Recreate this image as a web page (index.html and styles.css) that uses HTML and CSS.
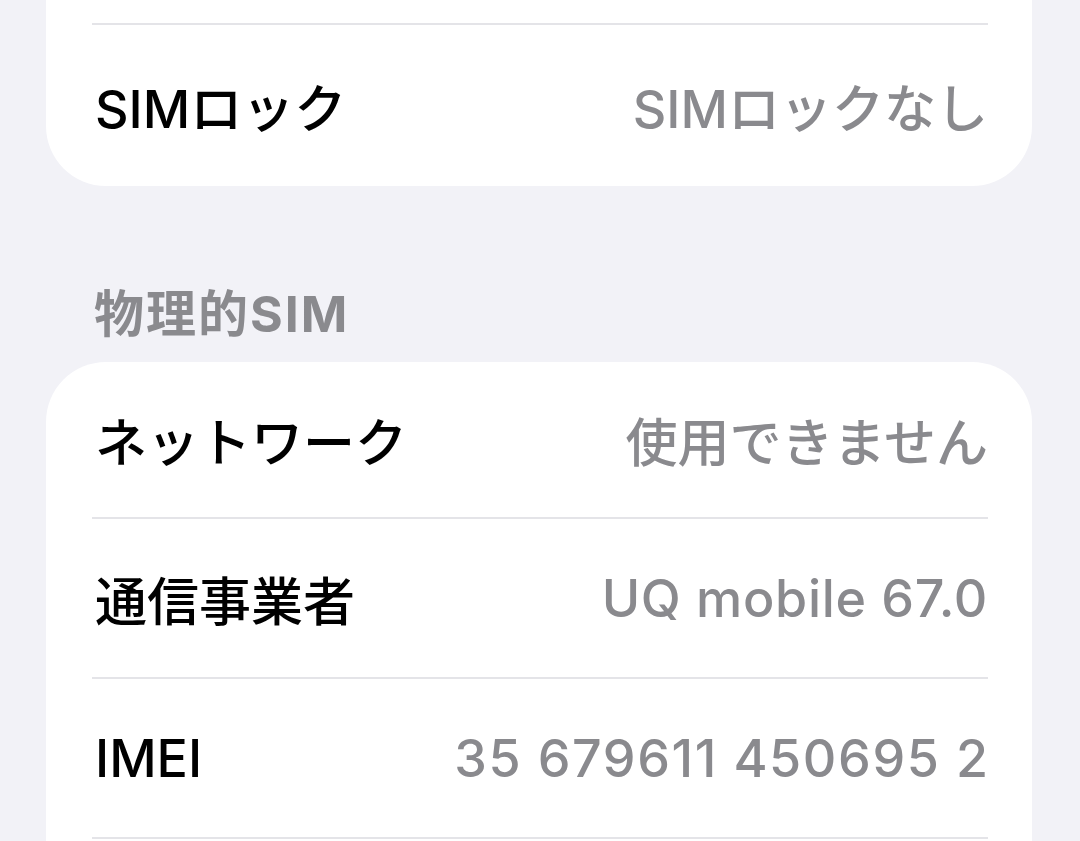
FILE: index.html
```html
<!DOCTYPE html>
<html lang="ja">
<head>
<meta charset="utf-8">
<link rel="stylesheet" href="styles.css">
</head>
<body>
<div class="page">
  <div class="card card-top">
    <div class="row row-hidden"><span class="label"></span><span class="value"></span></div>
    <div class="row"><span class="label">SIMロック</span><span class="value">SIMロックなし</span></div>
  </div>
  <div class="section-header">物理的SIM</div>
  <div class="card card-bottom">
    <div class="row"><span class="label">ネットワーク</span><span class="value">使用できません</span></div>
    <div class="row"><span class="label">通信事業者</span><span class="value latin">UQ mobile 67.0</span></div>
    <div class="row"><span class="label">IMEI</span><span class="value num">35 679611 450695 2</span></div>
    <div class="row"><span class="label"></span><span class="value"></span></div>
  </div>
</div>
</body>
</html>
```
FILE: styles.css
```css
html, body {
  margin: 0;
  padding: 0;
  background: #F2F2F7;
  height: 100%;
  overflow: hidden;
}
.page {
  padding: 0 48px 0 46px;
  font-family: "Inter", "Noto Sans CJK JP", sans-serif;
  -webkit-font-smoothing: antialiased;
}
.card {
  background: #FFFFFF;
  border-radius: 60px;
  padding: 0 44px 0 46px;
}
.card-top {
  margin-top: -135px;
}
.row {
  height: 160px;
  display: flex;
  align-items: center;
  justify-content: space-between;
  border-bottom: 2px solid #E4E4E8;
  box-sizing: border-box;
  padding: 0 0 0 3px;
}
.card-top .row:last-child {
  border-bottom: none;
  height: 161px;
}
.card-bottom .row:first-child {
  height: 157px;
}
.label {
  font-size: 52px;
  font-weight: 500;
  color: #000000;
}
.value {
  font-size: 52px;
  font-weight: 500;
  color: #8A8A8E;
}
.latin {
  letter-spacing: 0.7px;
}
.num {
  letter-spacing: 1.6px;
  margin-right: -1.6px;
}
.section-header {
  font-size: 50px;
  font-weight: 700;
  color: #8A8A8E;
  letter-spacing: 2px;
  padding: 72px 0 0 48px;
  height: 176px;
  display: flex;
  align-items: center;
  box-sizing: border-box;
}
```
